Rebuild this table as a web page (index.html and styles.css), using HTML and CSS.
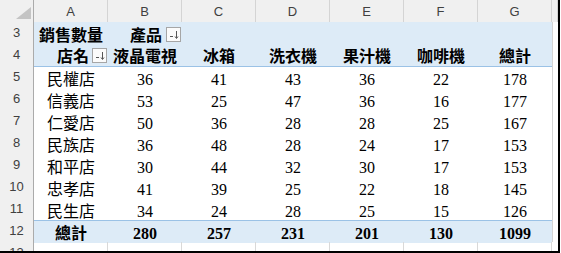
FILE: index.html
```html
<!DOCTYPE html>
<html lang="zh-Hant">
<head>
<meta charset="utf-8">
<title>銷售數量</title>
<link rel="stylesheet" href="styles.css">
</head>
<body>
<div class="sheet">
  <div class="row hdr">
    <div class="c corner"><svg width="34" height="22" viewBox="0 0 34 22"><polygon points="31,7 31,19 16,19" fill="#c4c4c4"/></svg></div>
    <div class="c">A</div><div class="c">B</div><div class="c">C</div><div class="c">D</div><div class="c">E</div><div class="c">F</div><div class="c">G</div><div class="c x"></div>
  </div>
  <div class="row blue">
    <div class="c rh">3</div>
    <div class="c b left">銷售數量</div>
    <div class="c b btn-cell pl2">產品<span class="dd"><svg width="13" height="13" viewBox="0 0 13 13"><path d="M3 8.5h3M9.5 3v7" stroke="#555" stroke-width="1" fill="none"/><path d="M8 8.5l1.5 2 1.5-2" stroke="#555" stroke-width="1" fill="none"/></svg></span></div>
    <div class="c"></div><div class="c"></div><div class="c"></div><div class="c"></div><div class="c"></div><div class="c x"></div>
  </div>
  <div class="row blue r4">
    <div class="c rh">4</div>
    <div class="c b btn-cell pl4">店名<span class="dd"><svg width="13" height="13" viewBox="0 0 13 13"><path d="M3 8.5h3M9.5 3v7" stroke="#555" stroke-width="1" fill="none"/><path d="M8 8.5l1.5 2 1.5-2" stroke="#555" stroke-width="1" fill="none"/></svg></span></div>
    <div class="c b">液晶電視</div><div class="c b">冰箱</div><div class="c b">洗衣機</div><div class="c b">果汁機</div><div class="c b">咖啡機</div><div class="c b">總計</div><div class="c x"></div>
  </div>
  <div class="row">
    <div class="c rh">5</div>
    <div class="c">民權店</div><div class="c">36</div><div class="c">41</div><div class="c">43</div><div class="c">36</div><div class="c">22</div><div class="c">178</div><div class="c x"></div>
  </div>
  <div class="row">
    <div class="c rh">6</div>
    <div class="c">信義店</div><div class="c">53</div><div class="c">25</div><div class="c">47</div><div class="c">36</div><div class="c">16</div><div class="c">177</div><div class="c x"></div>
  </div>
  <div class="row">
    <div class="c rh">7</div>
    <div class="c">仁愛店</div><div class="c">50</div><div class="c">36</div><div class="c">28</div><div class="c">28</div><div class="c">25</div><div class="c">167</div><div class="c x"></div>
  </div>
  <div class="row">
    <div class="c rh">8</div>
    <div class="c">民族店</div><div class="c">36</div><div class="c">48</div><div class="c">28</div><div class="c">24</div><div class="c">17</div><div class="c">153</div><div class="c x"></div>
  </div>
  <div class="row">
    <div class="c rh">9</div>
    <div class="c">和平店</div><div class="c">30</div><div class="c">44</div><div class="c">32</div><div class="c">30</div><div class="c">17</div><div class="c">153</div><div class="c x"></div>
  </div>
  <div class="row">
    <div class="c rh">10</div>
    <div class="c">忠孝店</div><div class="c">41</div><div class="c">39</div><div class="c">25</div><div class="c">22</div><div class="c">18</div><div class="c">145</div><div class="c x"></div>
  </div>
  <div class="row">
    <div class="c rh">11</div>
    <div class="c">民生店</div><div class="c">34</div><div class="c">24</div><div class="c">28</div><div class="c">25</div><div class="c">15</div><div class="c">126</div><div class="c x"></div>
  </div>
  <div class="row blue total">
    <div class="c rh">12</div>
    <div class="c b">總計</div><div class="c b">280</div><div class="c b">257</div><div class="c b">231</div><div class="c b">201</div><div class="c b">130</div><div class="c b">1099</div><div class="c x"></div>
  </div>
  <div class="row r13">
    <div class="c rh">13</div>
    <div class="c"></div><div class="c"></div><div class="c"></div><div class="c"></div><div class="c"></div><div class="c"></div><div class="c"></div><div class="c x"></div>
  </div>
</div>
</body>
</html>
```

FILE: styles.css
```css
html, body {
  margin: 0;
  padding: 0;
  background: #ffffff;
}

.sheet {
  width: 558px;
  height: 251px;
  border-right: 2px solid #000000;
  border-bottom: 2px solid #000000;
  overflow: hidden;
  display: flex;
  flex-direction: column;
  font-family: "Liberation Serif", "Noto Sans CJK TC", serif;
  font-size: 16px;
  color: #000000;
}

.row {
  flex: none;
  display: grid;
  grid-template-columns: 34px repeat(7, 74px) 6px;
  height: 22px;
}

.row.r13 {
  height: 9px;
  overflow: hidden;
}

.c {
  box-sizing: border-box;
  display: flex;
  align-items: flex-end;
  justify-content: center;
  white-space: nowrap;
  line-height: 18px;
  min-width: 0;
}

.b {
  font-weight: 700;
}

.left {
  justify-content: flex-start;
  padding-left: 5px;
  overflow: visible;
  position: relative;
  z-index: 1;
}

.pl2 {
  padding-left: 2px;
}

.pl4 {
  padding-left: 4px;
}

/* column header */
.hdr .c {
  background: #f0f0f0;
  border-right: 1px solid #d4d4d4;
  border-bottom: 1px solid #ababab;
  font-family: "Liberation Sans", "Noto Sans", sans-serif;
  font-size: 13px;
  font-weight: 400;
  color: #404040;
  align-items: center;
  line-height: 22px;
  padding-top: 1px;
}

.hdr .corner {
  padding: 0;
  display: block;
  border-right: 1px solid #ababab;
}

.hdr .corner svg {
  display: block;
}

/* row header */
.rh {
  background: #f0f0f0;
  border-right: 1px solid #ababab;
  border-bottom: 1px solid #d4d4d4;
  font-family: "Liberation Sans", "Noto Sans", sans-serif;
  font-size: 13px;
  color: #404040;
  align-items: center;
  line-height: 22px;
}

.x {
  border-left: 1px solid #d4d4d4;
  background: #ffffff;
}

.hdr .x {
  border-left: none;
}

/* pivot bands */
.blue .c:not(.rh):not(.x) {
  background: #ddebf7;
}

.r4 .c:not(.rh):not(.x) {
  border-bottom: 1px solid #9bc2e6;
}

.total .c:not(.rh):not(.x) {
  border-top: 1px solid #9bc2e6;
}

.r13 .c:not(.rh):not(.x) {
  border-right: 1px solid #d9d9d9;
}

.r13 .x {
  border-left: none;
}

/* dropdown button */
.btn-cell {
  position: relative;
}

.dd {
  position: absolute;
  right: 1px;
  bottom: 3px;
  width: 15px;
  height: 15px;
  box-sizing: border-box;
  border: 1px solid #a6a6a6;
  background: #fbfbfb;
  display: flex;
  align-items: center;
  justify-content: center;
}

.dd svg {
  display: block;
}
```
